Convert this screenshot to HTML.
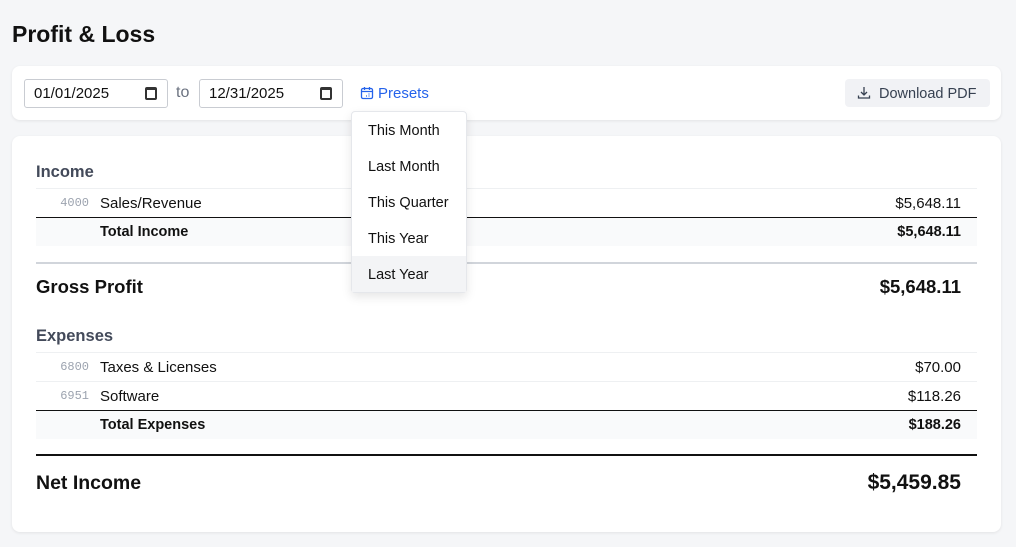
<!DOCTYPE html>
<html><head><style>
*{box-sizing:border-box;margin:0;padding:0}
body{width:1016px;height:547px;background:#f5f6f8;font-family:"Liberation Sans",sans-serif;color:#111;position:relative;overflow:hidden}
h1{position:absolute;left:12px;top:21px;font-size:23px;font-weight:bold;color:#111}
.card{position:absolute;left:12px;width:989px;background:#fff;border-radius:8px;box-shadow:0 1px 3px rgba(0,0,0,.08)}
.date{position:absolute;top:13px;height:29px;width:144px;border:1px solid #c9ccd2;border-radius:3px;font-size:15px;padding:5px 0 0 9px;color:#111}
.cal{position:absolute;right:10px;top:7px;width:12px;height:13px;border:2px solid #333;border-top-width:3px;border-radius:2px}
.abs{position:absolute}
.row{position:absolute;left:24px;width:941px;height:29px;font-size:15px}
.row .c{position:absolute;right:888px;top:8px;font-family:"Liberation Mono",monospace;font-size:12px;color:#9ca3af}
.row .n{position:absolute;left:64px;top:7px}
.row .a{position:absolute;right:16px;top:7px}
.sec{position:absolute;left:24px;font-size:16.5px;font-weight:bold;color:#434a5a}
.big{position:absolute;left:24px;width:941px;font-size:18.5px;font-weight:bold}
.big span{position:absolute;right:16px}
.dd{position:absolute;left:351px;top:111px;width:116px;height:182px;background:#fff;border:1px solid #e5e7eb;border-radius:4px;box-shadow:0 4px 10px rgba(0,0,0,.1)}
.dd div{height:36px;padding:11px 0 0 16px;font-size:14.5px;color:#111}
</style></head><body>
<h1>Profit &amp; Loss</h1>
<div class="card" style="top:66px;height:54px">
 <div class="date" style="left:12px">01/01/2025<span class="cal"></span></div>
 <div class="abs" style="left:164px;top:18px;font-size:16px;color:#6b7280">to</div>
 <div class="date" style="left:187px">12/31/2025<span class="cal"></span></div>
 <svg class="abs" style="left:348px;top:20px" width="14" height="14" viewBox="0 0 14 14" fill="none" stroke="#2563eb" stroke-width="1.3"><rect x="1.5" y="2.5" width="11" height="10" rx="1.5"/><path d="M1.5 5.5h11M4.5 1v3M9.5 1v3M6 10h1M8.5 10h1M8.5 8h1"/></svg>
 <div class="abs" style="left:366px;top:19px;font-size:15px;color:#2563eb">Presets</div>
 <div class="abs" style="left:833px;top:13px;width:145px;height:28px;background:#f1f2f5;border-radius:4px;font-size:14.5px;color:#374151;padding:7px 0 0 34px">Download PDF
  <svg class="abs" style="left:12px;top:7px" width="14" height="14" viewBox="0 0 14 14" fill="none" stroke="#374151" stroke-width="1.3"><path d="M7 1v8M4 6l3 3 3-3M1.5 9.5v2.5h11V9.5"/></svg></div>
</div>
<div class="card" style="top:136px;height:396px">
 <div class="sec" style="top:27px">Income</div>
 <div class="abs" style="left:24px;top:52px;width:941px;border-top:1px solid #eef0f2"></div>
 <div class="row" style="top:52px"><span class="c">4000</span><span class="n">Sales/Revenue</span><span class="a">$5,648.11</span></div>
 <div class="row" style="top:81px;background:#f9fafb;border-top:1px solid #111;font-weight:bold;font-size:14.5px"><span class="n" style="top:6px">Total Income</span><span class="a" style="top:6px">$5,648.11</span></div>
 <div class="abs" style="left:24px;top:126px;width:941px;border-top:2px solid #d1d5db"></div>
 <div class="big" style="top:140px">Gross Profit<span>$5,648.11</span></div>
 <div class="sec" style="top:191px">Expenses</div>
 <div class="abs" style="left:24px;top:216px;width:941px;border-top:1px solid #eef0f2"></div>
 <div class="row" style="top:216px"><span class="c">6800</span><span class="n">Taxes &amp; Licenses</span><span class="a">$70.00</span></div>
 <div class="row" style="top:245px;border-top:1px solid #eef0f2"><span class="c" style="top:7px">6951</span><span class="n" style="top:6px">Software</span><span class="a" style="top:6px">$118.26</span></div>
 <div class="row" style="top:274px;background:#f9fafb;border-top:1px solid #111;font-weight:bold;font-size:14.5px"><span class="n" style="top:6px">Total Expenses</span><span class="a" style="top:6px">$188.26</span></div>
 <div class="abs" style="left:24px;top:318px;width:941px;border-top:2px solid #111"></div>
 <div class="big" style="top:336px;font-size:19.5px">Net Income<span style="font-size:21px;top:-1px">$5,459.85</span></div>
</div>
<div class="dd">
 <div>This Month</div><div>Last Month</div><div>This Quarter</div><div>This Year</div><div style="background:#f3f4f6">Last Year</div>
</div>
</body></html>
